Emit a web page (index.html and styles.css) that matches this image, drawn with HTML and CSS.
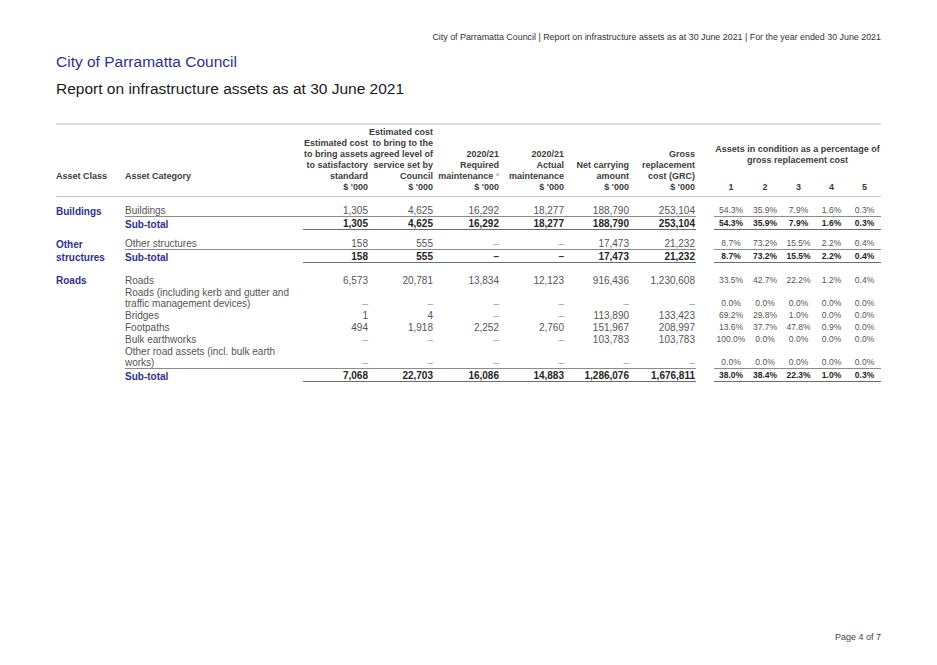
FILE: index.html
```html
<!DOCTYPE html>
<html lang="en">
<head>
<meta charset="utf-8">
<title>Report on infrastructure assets as at 30 June 2021</title>
<link rel="stylesheet" href="styles.css">
</head>
<body>
<div class="page">
  <div class="running-head">City of Parramatta Council | Report on infrastructure assets as at 30 June 2021 | For the year ended 30 June 2021</div>
  <h1 class="council">City of Parramatta Council</h1>
  <h2 class="report">Report on infrastructure assets as at 30 June 2021</h2>

  <table class="assets">
    <colgroup>
      <col class="c-class"><col class="c-cat">
      <col class="c-num66"><col class="c-num65"><col class="c-num66"><col class="c-num65"><col class="c-num65"><col class="c-num66">
      <col class="c-gap">
      <col class="c-p34"><col class="c-p34"><col class="c-p33"><col class="c-p33"><col class="c-p33">
    </colgroup>
    <thead>
      <tr class="h1">
        <th class="l">Asset Class</th>
        <th class="l">Asset Category</th>
        <th class="r">Estimated cost<br>to bring assets<br>to satisfactory<br>standard</th>
        <th class="r">Estimated cost<br>to bring to the<br>agreed level of<br>service set by<br>Council</th>
        <th class="r">2020/21<br>Required<br>maintenance <sup class="fn">a</sup></th>
        <th class="r">2020/21<br>Actual<br>maintenance</th>
        <th class="r">Net carrying<br>amount</th>
        <th class="r">Gross<br>replacement<br>cost (GRC)</th>
        <th></th>
        <th class="cond" colspan="5">Assets in condition as a percentage of<br>gross replacement cost</th>
      </tr>
      <tr class="h2">
        <th></th><th></th>
        <th class="r">$ '000</th><th class="r">$ '000</th><th class="r">$ '000</th><th class="r">$ '000</th><th class="r">$ '000</th><th class="r">$ '000</th>
        <th></th>
        <th class="c">1</th><th class="c">2</th><th class="c">3</th><th class="c">4</th><th class="c">5</th>
      </tr>
    </thead>
    <tbody>
      <tr class="first">
        <td class="cls">Buildings</td><td class="cat">Buildings</td>
        <td>1,305</td><td>4,625</td><td>16,292</td><td>18,277</td><td>188,790</td><td>253,104</td>
        <td class="gap"></td>
        <td class="p">54.3%</td><td class="p">35.9%</td><td class="p">7.9%</td><td class="p">1.6%</td><td class="p">0.3%</td>
      </tr>
      <tr class="sub">
        <td class="cls"></td><td class="cat">Sub-total</td>
        <td>1,305</td><td>4,625</td><td>16,292</td><td>18,277</td><td>188,790</td><td>253,104</td>
        <td class="gap"></td>
        <td class="p">54.3%</td><td class="p">35.9%</td><td class="p">7.9%</td><td class="p">1.6%</td><td class="p">0.3%</td>
      </tr>
    </tbody>
    <tbody>
      <tr class="first">
        <td class="cls">Other</td><td class="cat">Other structures</td>
        <td>158</td><td>555</td><td class="dash">–</td><td class="dash">–</td><td>17,473</td><td>21,232</td>
        <td class="gap"></td>
        <td class="p">8.7%</td><td class="p">73.2%</td><td class="p">15.5%</td><td class="p">2.2%</td><td class="p">0.4%</td>
      </tr>
      <tr class="sub">
        <td class="cls">structures</td><td class="cat">Sub-total</td>
        <td>158</td><td>555</td><td class="dash">–</td><td class="dash">–</td><td>17,473</td><td>21,232</td>
        <td class="gap"></td>
        <td class="p">8.7%</td><td class="p">73.2%</td><td class="p">15.5%</td><td class="p">2.2%</td><td class="p">0.4%</td>
      </tr>
    </tbody>
    <tbody>
      <tr class="first roads">
        <td class="cls">Roads</td><td class="cat">Roads</td>
        <td>6,573</td><td>20,781</td><td>13,834</td><td>12,123</td><td>916,436</td><td>1,230,608</td>
        <td class="gap"></td>
        <td class="p">33.5%</td><td class="p">42.7%</td><td class="p">22.2%</td><td class="p">1.2%</td><td class="p">0.4%</td>
      </tr>
      <tr>
        <td class="cls"></td><td class="cat">Roads (including kerb and gutter and<br>traffic management devices)</td>
        <td class="dash">–</td><td class="dash">–</td><td class="dash">–</td><td class="dash">–</td><td class="dash">–</td><td class="dash">–</td>
        <td class="gap"></td>
        <td class="p">0.0%</td><td class="p">0.0%</td><td class="p">0.0%</td><td class="p">0.0%</td><td class="p">0.0%</td>
      </tr>
      <tr>
        <td class="cls"></td><td class="cat">Bridges</td>
        <td>1</td><td>4</td><td class="dash">–</td><td class="dash">–</td><td>113,890</td><td>133,423</td>
        <td class="gap"></td>
        <td class="p">69.2%</td><td class="p">29.8%</td><td class="p">1.0%</td><td class="p">0.0%</td><td class="p">0.0%</td>
      </tr>
      <tr>
        <td class="cls"></td><td class="cat">Footpaths</td>
        <td>494</td><td>1,918</td><td>2,252</td><td>2,760</td><td>151,967</td><td>208,997</td>
        <td class="gap"></td>
        <td class="p">13.6%</td><td class="p">37.7%</td><td class="p">47.8%</td><td class="p">0.9%</td><td class="p">0.0%</td>
      </tr>
      <tr>
        <td class="cls"></td><td class="cat">Bulk earthworks</td>
        <td class="dash">–</td><td class="dash">–</td><td class="dash">–</td><td class="dash">–</td><td>103,783</td><td>103,783</td>
        <td class="gap"></td>
        <td class="p">100.0%</td><td class="p">0.0%</td><td class="p">0.0%</td><td class="p">0.0%</td><td class="p">0.0%</td>
      </tr>
      <tr>
        <td class="cls"></td><td class="cat">Other road assets (incl. bulk earth<br>works)</td>
        <td class="dash">–</td><td class="dash">–</td><td class="dash">–</td><td class="dash">–</td><td class="dash">–</td><td class="dash">–</td>
        <td class="gap"></td>
        <td class="p">0.0%</td><td class="p">0.0%</td><td class="p">0.0%</td><td class="p">0.0%</td><td class="p">0.0%</td>
      </tr>
      <tr class="sub">
        <td class="cls"></td><td class="cat">Sub-total</td>
        <td>7,068</td><td>22,703</td><td>16,086</td><td>14,883</td><td>1,286,076</td><td>1,676,811</td>
        <td class="gap"></td>
        <td class="p">38.0%</td><td class="p">38.4%</td><td class="p">22.3%</td><td class="p">1.0%</td><td class="p">0.3%</td>
      </tr>
    </tbody>
  </table>

  <div class="page-no">Page 4 of 7</div>
</div>
</body>
</html>
```

FILE: styles.css
```css
html, body {
  margin: 0;
  padding: 0;
  background: #ffffff;
}

body {
  font-family: "Liberation Sans", Arial, sans-serif;
  color: #4a4a4a;
}

.page {
  width: 937px;
  height: 665px;
  box-sizing: border-box;
  padding: 32px 56px 22px 56px;
  display: flex;
  flex-direction: column;
}

.running-head {
  font-size: 8.9px;
  line-height: 11px;
  color: #333333;
  text-align: right;
}

.council {
  margin: 10px 0 0 0;
  font-size: 15.5px;
  line-height: 18px;
  font-weight: normal;
  color: #2e3192;
}

.report {
  margin: 9px 0 0 0;
  font-size: 15.5px;
  line-height: 18px;
  font-weight: normal;
  color: #1a1a1a;
}

.assets {
  margin-top: 25px;
  width: 825px;
  table-layout: fixed;
  border-collapse: collapse;
  border-top: 2px solid #dcdcdc;
}

.c-class { width: 69px; }
.c-cat { width: 178px; }
.c-num66 { width: 66px; }
.c-num65 { width: 65px; }
.c-gap { width: 18px; }
.c-p34 { width: 34px; }
.c-p33 { width: 33px; }

.assets th {
  font-size: 9px;
  line-height: 11px;
  font-weight: bold;
  color: #3d3d3d;
  padding: 0 1px 0 0;
  white-space: nowrap;
  vertical-align: bottom;
}

.assets .h1 th {
  padding-top: 2px;
}

.assets .h2 th {
  padding-bottom: 3px;
  border-bottom: 1px solid #c4c4c4;
}

.assets th.l { text-align: left; }
.assets th.r { text-align: right; }
.assets th.c { text-align: center; padding-right: 0; }

.assets th.cond {
  text-align: center;
  vertical-align: middle;
  padding-right: 0;
}

.fn {
  font-size: 6px;
  font-weight: normal;
  color: #9a9a9a;
  vertical-align: 3px;
  line-height: 0;
}

.assets td {
  font-size: 10px;
  line-height: 11px;
  padding: 1px 1px 0 0;
  text-align: right;
  vertical-align: bottom;
  color: #555555;
  white-space: nowrap;
}

.assets td.cls {
  text-align: left;
  font-weight: bold;
  color: #2e3192;
}

.assets td.cat {
  text-align: left;
}

.assets td.dash {
  color: #a0a0a0;
}

.assets td.p {
  font-size: 8.5px;
  text-align: center;
  padding-right: 0;
}

.assets tr.first td {
  padding-top: 8px;
}

.assets tr.first.roads td {
  padding-top: 12px;
}

.assets tr.sub td {
  font-weight: bold;
  color: #262626;
  border-top: 1px solid #8c8c8c;
  border-bottom: 1px solid #6e6e6e;
}

.assets tr.sub td.cat {
  color: #2e3192;
  border-bottom: none;
}

.assets tr.sub td.cls {
  color: #2e3192;
  border-top: none;
  border-bottom: none;
}

.assets tr.sub td.gap {
  border-top: none;
  border-bottom: none;
}

.assets tr.sub td.dash {
  color: #333333;
}

.page-no {
  margin-top: auto;
  font-size: 9px;
  line-height: 11px;
  color: #444444;
  text-align: right;
}
```
